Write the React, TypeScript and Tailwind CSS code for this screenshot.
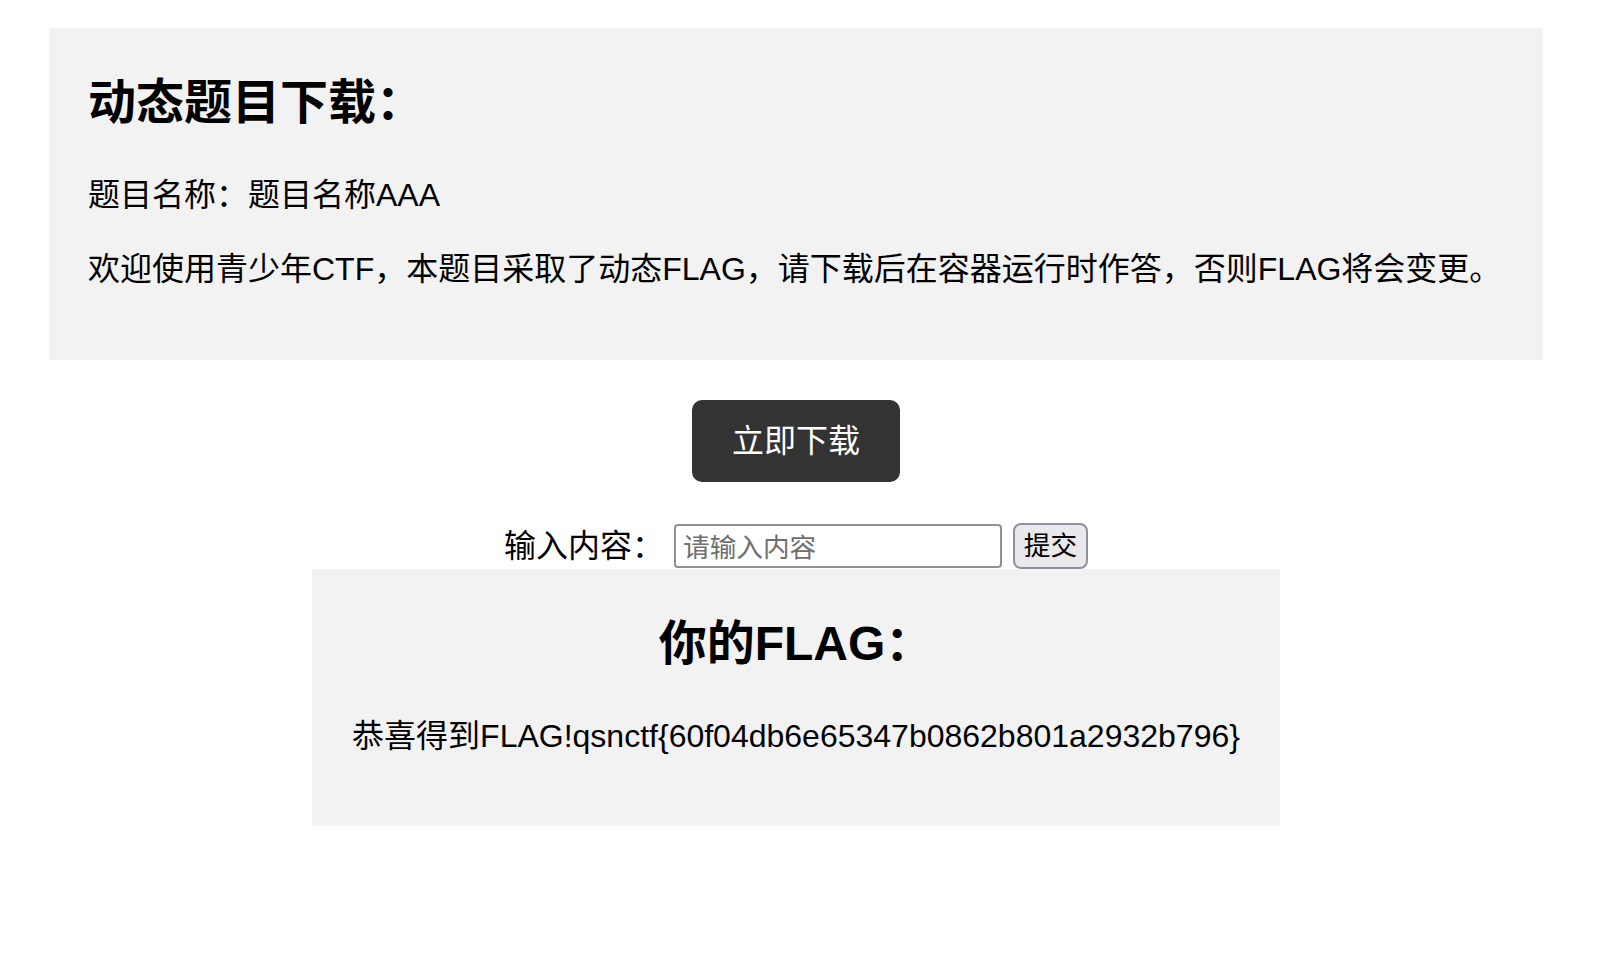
import React from "react";

export default function App() {
  return (
    <div
      className="w-[1592px] bg-white text-black pt-[28px]"
      style={{ fontFamily: '"Liberation Sans", "Noto Sans CJK SC", sans-serif' }}
    >
      <div className="mx-[49px] bg-[#f2f2f2] px-[39px] pt-[43px] pb-[70px]">
        <h2 className="text-[48px] leading-[63px] font-bold m-0">动态题目下载：</h2>
        <p className="text-[32px] leading-[42px] mt-[40px]">题目名称：题目名称AAA</p>
        <p className="text-[32px] leading-[42px] mt-[32px]">
          欢迎使用青少年CTF，本题目采取了动态FLAG，请下载后在容器运行时作答，否则FLAG将会变更。
        </p>
      </div>

      <div className="flex justify-center mt-[40px]">
        <button className="w-[208px] h-[82px] rounded-[10px] bg-[#333333] text-white text-[32px] leading-[42px]">
          立即下载
        </button>
      </div>

      <div className="flex justify-center items-center mt-[40px] h-[47px]">
        <label className="text-[32px] leading-[42px] mr-[10px]">输入内容：</label>
        <input
          type="text"
          placeholder="请输入内容"
          className="w-[328px] h-[44px] border-2 border-[#8f8f9d] rounded-[4px] px-[7px] pt-[5px] pb-0 text-[26.67px] leading-[34px] bg-white placeholder:text-[#6f6f6f] outline-none"
        />
        <button className="ml-[11px] w-[75px] h-[46px] border-2 border-[#8f8f9d] rounded-[8px] bg-[#e9e9ed] text-[26.67px] leading-none pt-[2px]">
          提交
        </button>
      </div>

      <div className="w-[968px] mx-auto bg-[#f2f2f2] px-[40px] pt-[43px] pb-[69px] text-center">
        <h2 className="text-[48px] leading-[63px] font-bold m-0">你的FLAG：</h2>
        <p className="text-[32px] leading-[42px] mt-[40px]">
          恭喜得到FLAG!qsnctf{"{"}60f04db6e65347b0862b801a2932b796{"}"}
        </p>
      </div>
      <div className="h-[141px]" />
    </div>
  );
}
